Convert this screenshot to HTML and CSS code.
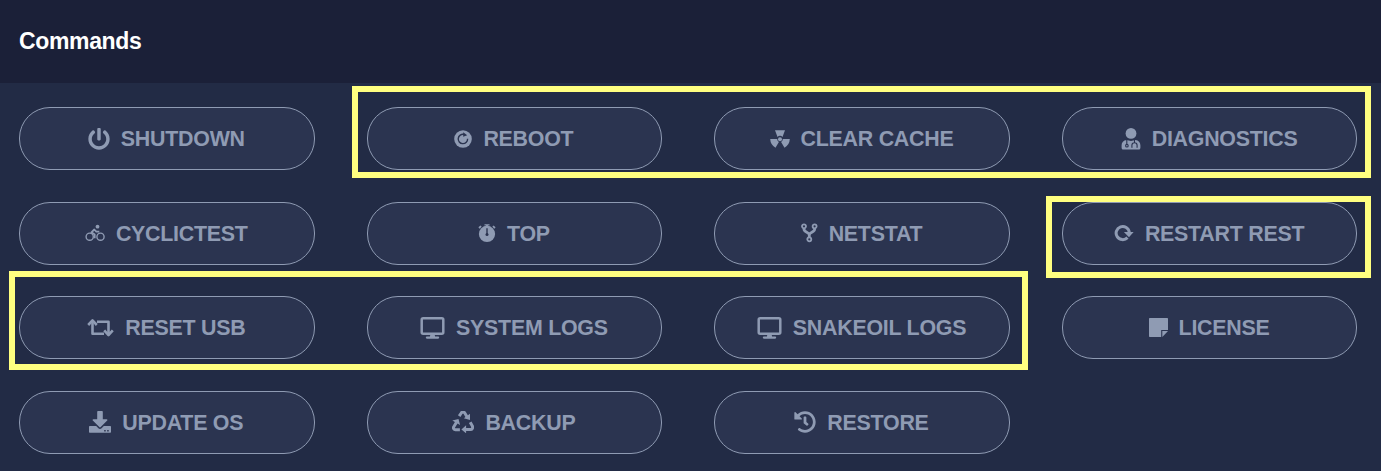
FILE: index.html
```html
<!DOCTYPE html>
<html lang="en">
<head>
<meta charset="utf-8">
<title>Commands</title>
<link rel="stylesheet" href="styles.css">
</head>
<body>
<section class="card">
<header class="card-header"><h1 class="title">Commands</h1></header>
<main class="commands">
<button class="cmd"><svg width="22" height="22" viewBox="0 0 512 512"><path d="M400 54.1c63 45 104 118.6 104 201.9 0 136.8-110.8 247.7-247.5 248C120 504.3 8.2 393 8 256.4 7.9 173.1 48.9 99.3 111.8 54.2c11.7-8.3 28-4.8 35 7.7L162.6 90c5.9 10.5 3.1 23.8-6.6 31-41.5 30.8-68 79.6-68 134.9-.1 92.3 74.5 168.1 168 168.1 91.6 0 168.6-74.2 168-169.1-.3-51.8-24.7-101.8-68.1-134-9.7-7.2-12.4-20.5-6.5-30.9l15.8-28.1c7-12.4 23.2-16.1 34.8-7.8zM296 264V24c0-13.3-10.7-24-24-24h-32c-13.3 0-24 10.700-24 24v240c0 13.300 10.700 24 24 24h32c13.300 0 24-10.700 24-24z"/></svg><span>SHUTDOWN</span></button>
<button class="cmd"><svg width="18" height="18" viewBox="0 0 18 18"><circle cx="9" cy="9" r="8.8"/><path class="cut" d="M10 4.4A4.7 4.7 0 1 0 13.6 8.7"/><path class="hole" d="M9.2 2.2v4.6l4-1.5z"/></svg><span>REBOOT</span></button>
<button class="cmd"><svg width="20" height="18" viewBox="0 0 20 18"><circle cx="10" cy="9.2" r="2"/><path d="M5 .3h10l-2.500 6.700a3.300 3.300 0 0 0-5 0zM.2 9.100h7a3 3 0 0 0 1.700 2.800L5.500 17.800A10.500 10.500 0 0 1 .2 9.100zM19.800 9.100h-7a3 3 0 0 1-1.700 2.800l3.400 5.900a10.500 10.500 0 0 0 5.300-8.700z"/></svg><span>CLEAR CACHE</span></button>
<button class="cmd"><svg width="20" height="22" viewBox="0 0 19 22"><circle cx="9.5" cy="5.4" r="5.4"/><path d="M5 12l4.5 1 4.5-1c3 .3 4.9 2.5 4.9 5.3v2.4c0 1.2-.8 1.9-1.9 1.9H2c-1.1 0-1.9-.7-1.9-1.9v-2.4C.1 14.5 2 12.3 5 12z"/><path class="cut fine" d="M5.300 12v4.500M13 12v2.600M11 19.300h-.6v-2a2.600 2.600 0 0 1 5.200 0v2h-.6"/><circle class="cut fine" cx="5.400" cy="17.700" r="1.300"/></svg><span>DIAGNOSTICS</span></button>
<button class="cmd"><svg width="20" height="18" viewBox="0 0 20 18"><g class="line thin"><circle cx="4.7" cy="12.7" r="3.6"/><circle cx="15.5" cy="12.7" r="3.6"/></g><path class="line mid" d="M14.3 7.6h-3L9.3 5.5 6.4 8.3l3.3 2.1v3.9"/><circle cx="12.5" cy="2.7" r="1.9"/></svg><span>CYCLICTEST</span></button>
<button class="cmd"><svg width="18" height="18" viewBox="0 0 18 18"><circle cx="9" cy="9.9" r="8.1"/><path d="M6.5.3h5v1.2H9.9v1.8H8.1V1.5H6.5z"/><path class="line mid" d="M1 4l2.1-1.9M17 4l-2.1-1.9"/><path class="cut thin" d="M9 4.2v6.5"/><circle class="hole" cx="9" cy="10.6" r="1.5"/></svg><span>TOP</span></button>
<button class="cmd"><svg width="17" height="20" viewBox="0 0 17 20"><g class="line mid"><circle cx="3" cy="3.3" r="2"/><circle cx="13.6" cy="3.3" r="2"/><circle cx="8.3" cy="16.3" r="2"/></g><path class="line wide" d="M3 5.6v.7c0 3.2 5.3 2.7 5.3 5.7v2M13.6 5.6v.7c0 3.2-5.3 2.7-5.3 5.7"/></svg><span>NETSTAT</span></button>
<button class="cmd"><svg width="20" height="18" viewBox="0 0 20 18"><path class="line bold" d="M13.500 13.600A6.600 6.600 0 1 1 15.300 8.300"/><path d="M9.900 8.100h9.700L15 13.300z"/></svg><span>RESTART REST</span></button>
<button class="cmd"><svg width="27" height="22" viewBox="0 0 27 22"><path class="line ribbon" d="M5.500 3.500v13.200h11.500M10 4.700h11.500v13"/><path class="line ribbon" d="M1.200 8l4.300-4.600L9.800 8M17.200 13.400l4.300 4.600 4.300-4.600"/></svg><span>RESET USB</span></button>
<button class="cmd"><svg width="25" height="22" viewBox="0 0 25 22"><rect class="line thick" x="1.7" y="1.3" width="21.6" height="15.4" rx="1.5"/><path d="M10.5 17h4l.6 2.5h3a1.1 1.1 0 0 1 0 2.2H6.9a1.1 1.1 0 0 1 0-2.2h3z"/></svg><span>SYSTEM LOGS</span></button>
<button class="cmd"><svg width="25" height="22" viewBox="0 0 25 22"><rect class="line thick" x="1.7" y="1.3" width="21.6" height="15.4" rx="1.5"/><path d="M10.5 17h4l.6 2.5h3a1.1 1.1 0 0 1 0 2.2H6.9a1.1 1.1 0 0 1 0-2.2h3z"/></svg><span>SNAKEOIL LOGS</span></button>
<button class="cmd"><svg width="19" height="19" viewBox="0 0 19 19"><path d="M.7 0h17.6a.7.7 0 0 1 .7.7V12h-6.8v7H.7a.7.7 0 0 1-.7-.7V.7A.7.7 0 0 1 .7 0zM13.3 13.1H19L13.3 19z"/></svg><span>LICENSE</span></button>
<button class="cmd"><svg width="22" height="22" viewBox="0 0 22 22"><path d="M9.2 0h3.6c.6 0 1 .4 1 1v7.2h3.8c.8 0 1.1.9.6 1.4l-6.5 6.500c-.4.4-1 .4-1.400 0L3.800 9.600c-.5-.5-.2-1.400.6-1.400h3.800V1c0-.6.4-1 1-1z"/><path fill-rule="evenodd" d="M1 15h6.200l2.200 2.200c.9.9 2.300.9 3.200 0l2.200-2.200H21c.6 0 1 .4 1 1v4.800c0 .6-.4 1-1 1H1c-.6 0-1-.4-1-1V16c0-.6.4-1 1-1zm14.200 4v1.500h1.500V19zm3 0v1.500h1.500V19z"/></svg><span>UPDATE OS</span></button>
<button class="cmd"><svg width="22" height="22" viewBox="0 0 22 22"><g class="line bold"><path d="M7.2 5.1l1.900-2.900a2.200 2.200 0 0 1 3.800 0l2.200 3.700"/><path d="M4.5 11.200l-2.700 4.600c-.9 1.500.1 2.900 1.600 2.900h4.500"/><path d="M18.200 11.300l2 3.500c1.100 2-.1 3.800-1.800 3.800h-4.700"/></g><path d="M18 2.800v6.100l-6.200-1.600zM.3 9.500l6.200-1.600 1.600 6zM14.100 14.300v8l-4.700-3.900z"/></svg><span>BACKUP</span></button>
<button class="cmd"><svg width="22" height="22" viewBox="0 0 512 512"><path d="M504 255.531c.253 136.64-111.18 248.372-247.82 248.468-59.015.042-113.223-20.53-155.822-54.911-11.077-8.94-11.905-25.541-1.839-35.607l11.267-11.267c8.609-8.609 22.353-9.551 31.891-1.984C173.062 425.135 212.781 440 256 440c101.705 0 184-82.311 184-184 0-101.705-82.311-184-184-184-48.814 0-93.149 18.969-126.068 49.932l50.754 50.754c10.08 10.08 2.941 27.314-11.313 27.314H24c-8.837 0-16-7.163-16-16V38.627c0-14.254 17.234-21.393 27.314-11.314l49.372 49.372C129.209 34.136 189.552 8 256 8c136.81 0 247.747 110.78 248 247.531zm-180.912 78.784l9.823-12.63c8.138-10.463 6.253-25.542-4.21-33.679L288 256.349V152c0-13.255-10.745-24-24-24h-16c-13.255 0-24 10.745-24 24v135.651l65.409 50.874c10.463 8.137 25.541 6.253 33.679-4.21z"/></svg><span>RESTORE</span></button>
</main>
<div class="mark mark-top"></div>
<div class="mark mark-rest"></div>
<div class="mark mark-logs"></div>
</section>
</body>
</html>
```
FILE: styles.css
```css
* { box-sizing: border-box; }
body {
  margin: 0;
  background: #222b45;
  font-family: "Liberation Sans", Arial, sans-serif;
  overflow: hidden;
}
.card { position: relative; height: 471px; }
.card-header {
  height: 83px;
  padding: 0 19px 2px;
  display: flex;
  align-items: center;
  background: #1b2038;
}
.title {
  margin: 0;
  color: #fff;
  font-size: 23px;
  letter-spacing: -0.35px;
  line-height: 30px;
}
.commands {
  display: grid;
  grid-template-columns: repeat(4, 1fr);
  grid-auto-rows: 63px;
  gap: 31.6px 52px;
  padding: 24px 23.6px 0 19px;
}
.cmd {
  display: flex;
  align-items: center;
  justify-content: center;
  gap: 11px;
  padding: 0 1px 0 0;
  border: 1px solid #8f9bb3;
  border-radius: 31px;
  background: #2b3450;
  color: #8f9bb3;
  font: bold 21.4px/24px "Liberation Sans", Arial, sans-serif;
  letter-spacing: -0.25px;
  white-space: nowrap;
}
.cmd span { padding-top: 1px; }
.cmd svg { flex: none; fill: #8f9bb3; }
.cmd .line { fill: none; stroke: #8f9bb3; stroke-linejoin: round; }
.cmd .cut { fill: none; stroke: #2b3450; stroke-width: 1.4; }
.cmd .hole { fill: #2b3450; }
.cmd .fine { stroke-width: 1.1; }
.cmd .thin { stroke-width: 1.4; }
.cmd .mid { stroke-width: 1.8; }
.cmd .thick { stroke-width: 2.5; }
.cmd .ribbon { stroke-width: 2.6; }
.cmd .wide { stroke-width: 2.8; }
.cmd .bold { stroke-width: 3; }
.mark { position: absolute; border: 6px solid #ffff80; }
.mark-top { left: 352px; top: 86px; width: 1019px; height: 92px; }
.mark-rest { left: 1046px; top: 196px; width: 325px; height: 82px; }
.mark-logs { left: 9px; top: 271px; width: 1019px; height: 99px; }
```
